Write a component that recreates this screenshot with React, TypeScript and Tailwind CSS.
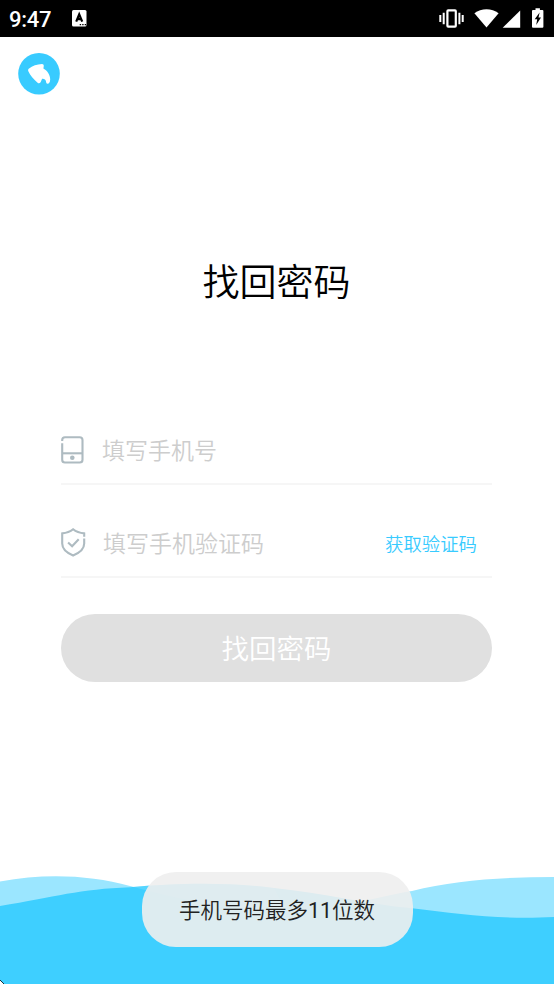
import { useState } from 'react';
import type { ReactNode } from 'react';

function StatusBar() {
  return (
    <header className="flex h-[37px] shrink-0 items-center bg-black pl-[9px] text-white">
      <span className="pt-0.5 font-['Roboto'] text-[22px] leading-[37px] font-medium tracking-[-0.3px]">9:47</span>
      <svg className="ml-[21px]" width="15" height="17" viewBox="0 0 15 17">
        <rect width="14.5" height="16.5" rx="1.5" fill="#fff" />
        <path d="M4.2 11.6 7.2 4.4 10.2 11.6M5.2 9.2h4" fill="none" stroke="#000" strokeWidth="2.2" />
        <path d="M7.7 14.7h1.4M10.2 14.7h1.4M12.7 14.7h1.4" stroke="#000" strokeWidth="1.3" />
      </svg>
      <svg className="ml-auto" width="115" height="37" viewBox="0 0 115 37">
        {/* vibrate */}
        <rect x="8.4" y="10.4" width="8.4" height="16.2" rx="0.8" fill="none" stroke="#fff" strokeWidth="2.2" />
        <path d="M4.7 12.7v11.6M20.4 12.7v11.6M1.3 15v7M23.7 15v7" stroke="#fff" strokeWidth="2" />
        {/* wifi */}
        <path d="M35.4 13.2C42.4 7.8 52.6 7.8 59.6 13.2L47.5 27.6Z" fill="#fff" />
        <path d="M81.2 10.5V27.7H63.7Z" fill="#fff" />
        {/* battery */}
        <path d="M96.5 8.2h4.4V10h2.5q1 0 1 1v15.7q0 1-1 1h-9.4q-1 0-1-1V11q0-1 1-1h2.5Z" fill="#fff" />
        <path d="M100.6 12.6 95.7 19.2h2.5l-1 5.8 4.8-7.6h-2.5Z" fill="#000" />
      </svg>
    </header>
  );
}

function PhoneIcon() {
  return (
    <svg width="24" height="28" viewBox="0 0 24 28" fill="none" stroke="#aebbc1" strokeWidth="2.1">
      <path d="M1.2 5V4Q1.2 1.2 4 1.2h14.7q2.8 0 2.8 2.8v19.7q0 2.8-2.8 2.8H4q-2.8 0-2.8-2.8V7.2" />
      <path d="M1.2 17.3h20.3" />
      <circle cx="11.3" cy="21.8" r="2.3" fill="#aebbc1" stroke="none" />
    </svg>
  );
}

function ShieldIcon() {
  return (
    <svg width="25" height="29" viewBox="0 0 25 29" fill="none" stroke="#aebbc1" strokeWidth="2.1">
      <path d="M23.2 8.8V5.4Q16.4 4.8 12.1 1.3 7.8 4.8 1.2 5.4v10.2q0 7.5 10.9 11.9 11.1-4.4 11.1-11.9v-5.1" />
      <path d="m7.1 14.5 4 3.8 6.6-7.1" />
    </svg>
  );
}

interface FieldProps {
  icon: ReactNode;
  placeholder: string;
  value: string;
  onChange: (value: string) => void;
  children?: ReactNode;
}

function Field({ icon, placeholder, value, onChange, children }: FieldProps) {
  return (
    <div className="flex h-[93px] items-end border-b-2 border-[#f6f6f6] pb-[13px]">
      <div className="flex h-[42px] w-full items-center">
        <span className="shrink-0 pt-px">{icon}</span>
        <input
          type="tel"
          placeholder={placeholder}
          value={value}
          onChange={(e) => onChange(e.target.value)}
          className="ml-[17px] h-[36px] min-w-0 flex-1 bg-transparent pt-1 text-[23px] text-[#333] outline-none placeholder:text-[#cdcdcd]"
        />
        {children}
      </div>
    </div>
  );
}

function Waves() {
  return (
    <svg className="block w-full" height="114" viewBox="0 870 554 114" preserveAspectRatio="none">
      <path
        d="M0 881.5C45 873 90 875 130 886C185 901 235 911 285 910C345 909 370 898 412 891C455 880 505 877 554 877V984H0Z"
        fill="#9be6ff"
      />
      <path
        d="M0 906C55 897 80 889 130 887.3C175 883 230 882 274 888C325 893 365 904 412 908.3C460 914 500 920 554 917V984H0Z"
        fill="#3ecfff"
      />
      <path d="M130 887.3C175 883 230 882 274 888L285 910C235 911 185 901 130 886Z" fill="#9be6ff" opacity="0.25" />
      <path d="M0 980h1v1h1v1h1v1h1v1H0Z" fill="#17323c" />
      <path d="M0 981h1v1h1v1h1v1H0Z" fill="#fff" />
    </svg>
  );
}

export default function App() {
  const [phone, setPhone] = useState('');
  const [code, setCode] = useState('');

  return (
    <div className="relative flex h-[984px] w-[554px] flex-col overflow-hidden bg-white font-['Roboto','Noto_Sans_CJK_SC',sans-serif] font-[350]">
      <StatusBar />
      <button className="mt-4 ml-[18px] h-[42px] w-[42px] shrink-0" aria-label="返回">
        <svg width="42" height="42" viewBox="0 0 42 42">
          <circle cx="21" cy="20.8" r="20.8" fill="#38cbff" />
          <path
            d="M10.7 15.8C14.6 12.8 19 11.2 24 11Q25.9 11 25.8 12.7L25.4 15.4C29.6 17.8 32.2 21.8 32.2 26.4Q32.2 29.4 30.6 30.6Q28.6 31.2 28.2 29.4C28 26.8 26.6 25.6 24.1 25.8L22.6 29.3Q21.2 31.2 19.6 29.7C15.6 26.4 12.2 22.2 10.2 18Q9.7 16.6 10.7 15.8Z"
            fill="#fff"
          />
        </svg>
      </button>

      <main className="flex flex-1 flex-col pr-[62px] pl-[61px]">
        <h1 className="mt-[162px] text-center text-[37px] leading-[54px] text-black">找回密码</h1>
        <form className="mt-[81px] flex flex-col" onSubmit={(e) => e.preventDefault()}>
          <Field icon={<PhoneIcon />} placeholder="填写手机号" value={phone} onChange={setPhone} />
          <Field icon={<ShieldIcon />} placeholder="填写手机验证码" value={code} onChange={setCode}>
            <button type="button" className="mr-[15px] shrink-0 pt-1.5 text-[18.4px] text-[#38cbff]">
              获取验证码
            </button>
          </Field>
          <button className="mt-9 h-[68px] rounded-full bg-[#e0e0e0] pt-[3px] text-[27.5px] text-white">找回密码</button>
        </form>
      </main>

      <Waves />
      <div className="absolute top-[872px] left-[141.5px] flex h-[75px] w-[271px] items-center justify-center rounded-[34px] bg-[#eeeeee]/90 pt-[3px] text-[21.5px] text-[#222]">
        <span>手机号码最多<span className="font-normal">11</span>位数</span>
      </div>
    </div>
  );
}
